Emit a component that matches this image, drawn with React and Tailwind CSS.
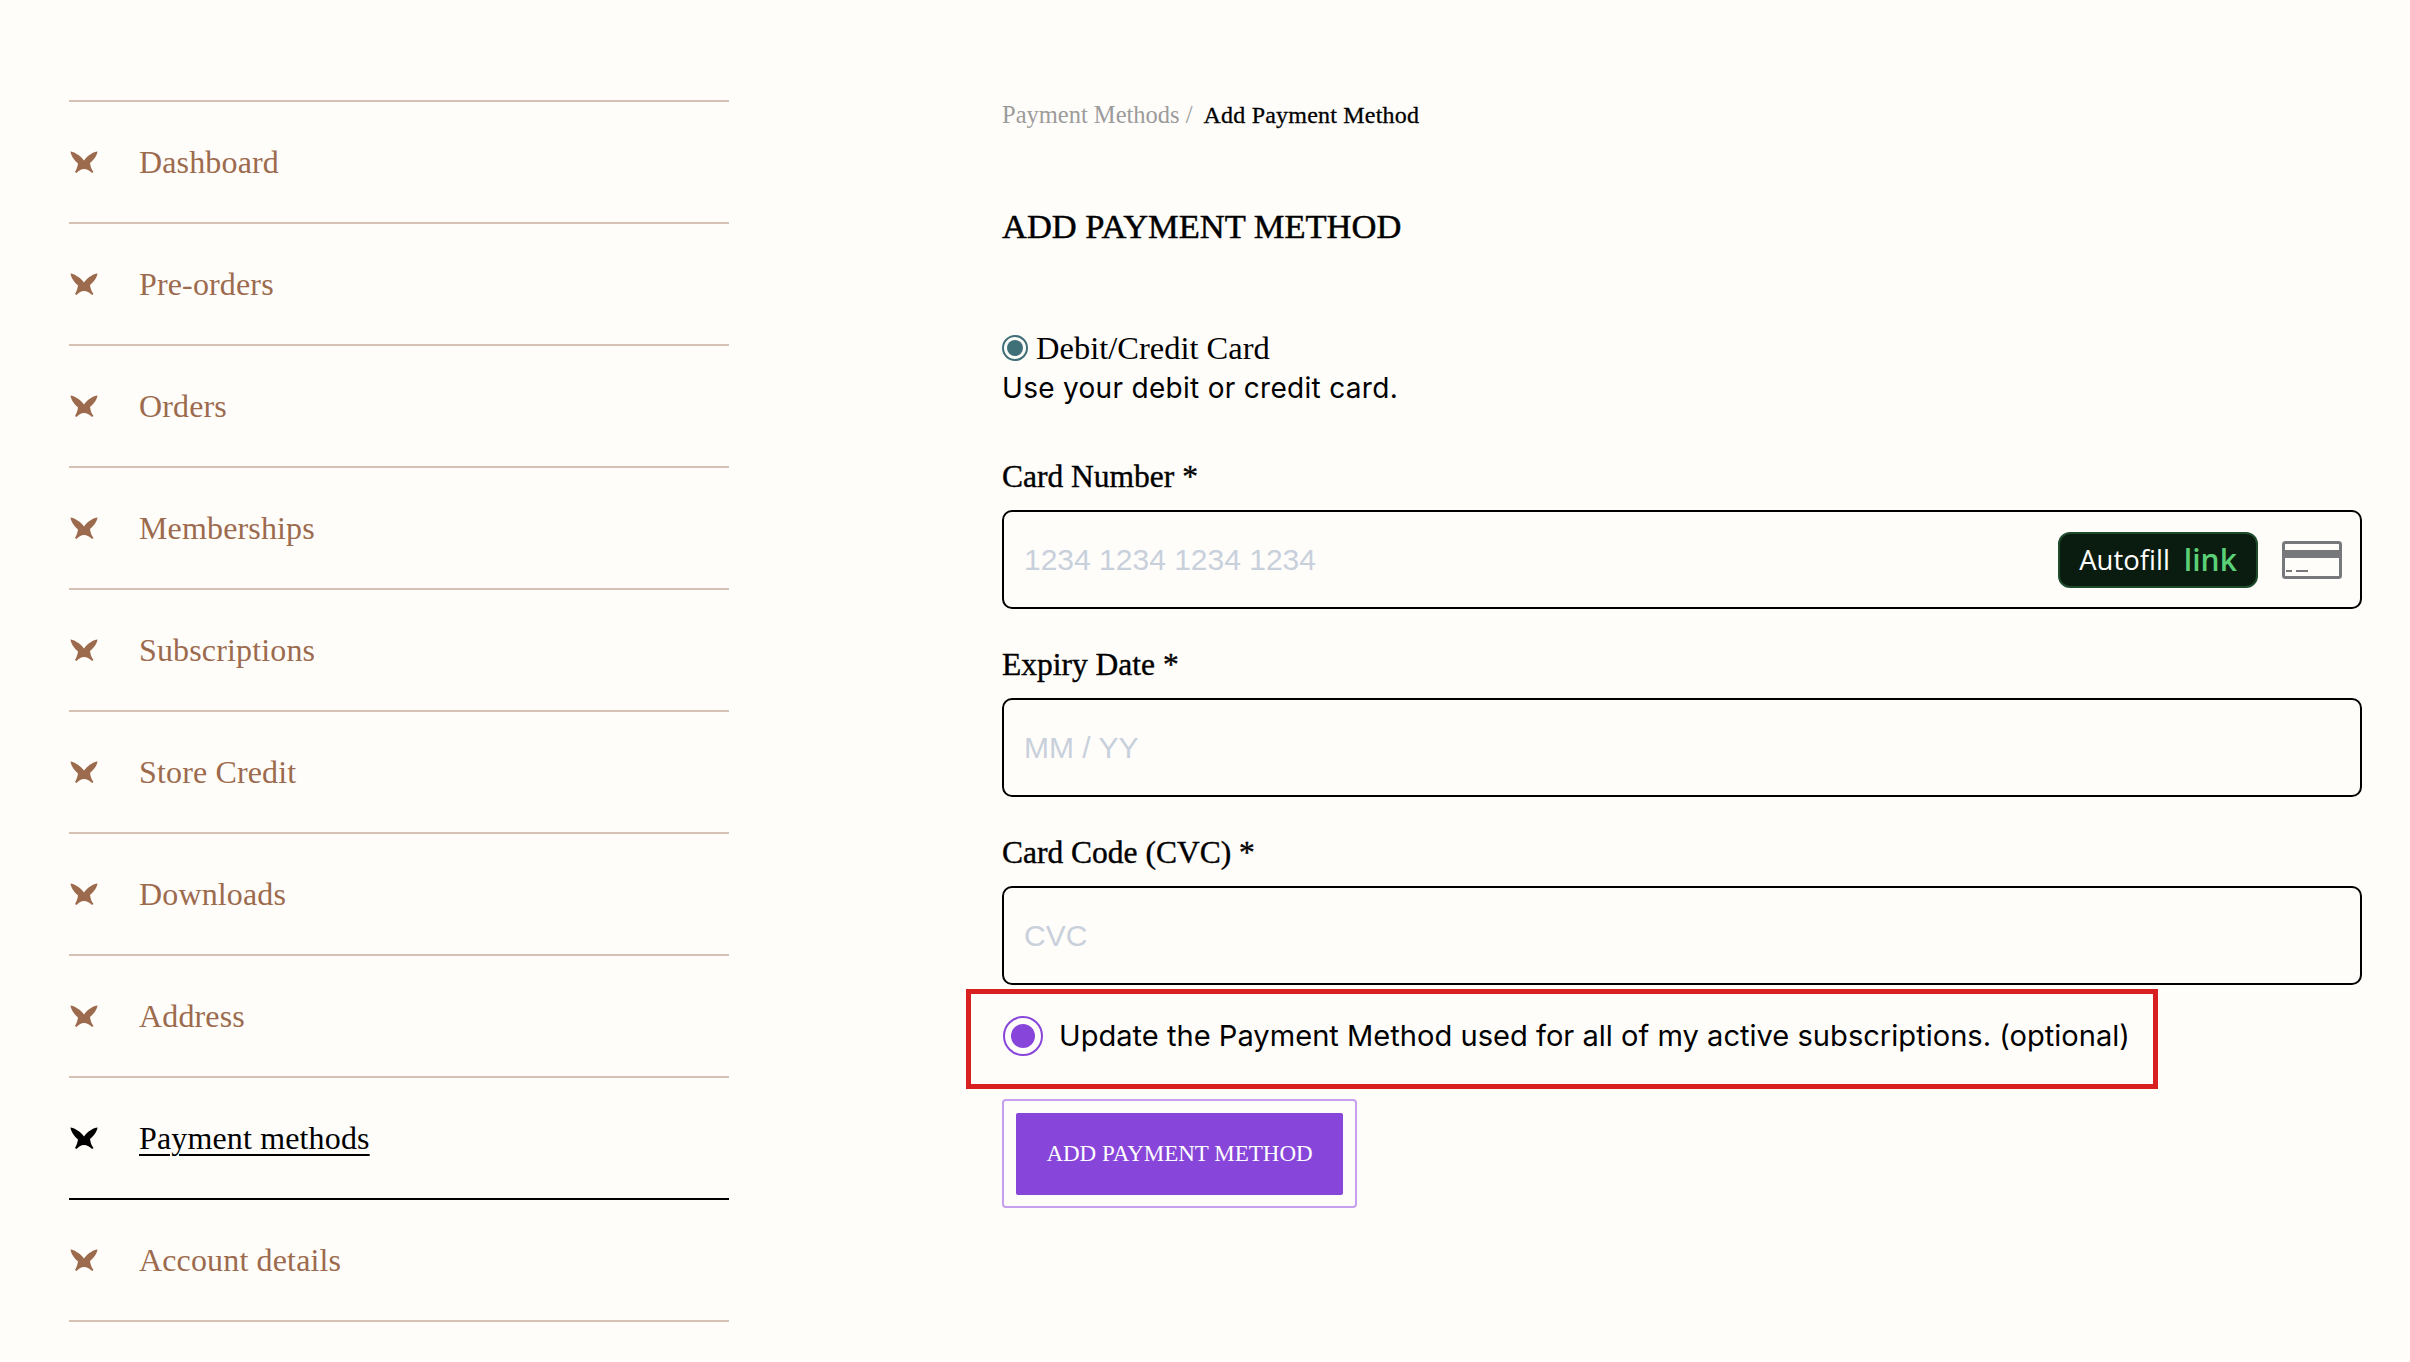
import React from 'react';

const navItems = ['Dashboard', 'Pre-orders', 'Orders', 'Memberships', 'Subscriptions', 'Store Credit', 'Downloads', 'Address', 'Payment methods', 'Account details'];

const Star = ({ className }) => (
  <svg viewBox="0 0 28 22" className={className} fill="currentColor">
    <path d="M0.5 0.5C4 1 10 4 14 9.5C18 4 23.5 1 27.5 0.5C27 5 23 9.5 20 12C20.5 15.5 21.5 18.5 23.5 21L22 22C20 20 17 18 14 18C11 18 8.5 20 6.5 22L5 21C6.5 18.5 7.5 15.5 8 12.5C4.5 9.5 1 5 0.5 0.5Z" />
  </svg>
);

const CardIcon = () => (
  <svg viewBox="0 0 60 38" className="w-[60px] h-[38px] shrink-0">
    <rect x="1.5" y="1.5" width="57" height="35" rx="2" fill="none" stroke="#77787c" strokeWidth="3" />
    <rect x="2" y="9" width="56" height="8" fill="#77787c" />
    <rect x="4" y="29" width="6" height="2" fill="#77787c" />
    <rect x="14" y="29" width="12" height="2" fill="#77787c" />
  </svg>
);

const Sidebar = () => (
  <ul className="w-[660px] shrink-0 border-t-2 border-[#d6c3b5]">
    {navItems.map((item) => {
      const active = item === 'Payment methods';
      return (
        <li key={item} className={`h-[122px] flex items-center border-b-2 ${active ? 'border-black text-black' : 'border-[#d6c3b5] text-[#9c6b4e]'}`}>
          <Star className="w-[28px] h-[22px] ml-[1px] shrink-0" />
          <span className={`ml-[41px] text-[32px] leading-none tracking-[0.15px] ${active ? 'underline decoration-2 underline-offset-[5px]' : ''}`}>{item}</span>
        </li>
      );
    })}
  </ul>
);

const Field = ({ label, placeholder, children }) => (
  <div>
    <label className="block text-[31.5px] leading-[36px] [-webkit-text-stroke:0.4px_black] text-black mb-[15px]">{label}</label>
    <div className="h-[99px] flex items-center border-2 border-black rounded-[10px] pl-[20px] pr-[18px]">
      <input
        readOnly
        placeholder={placeholder}
        className="flex-1 min-w-0 outline-none bg-transparent text-[30px] font-['Liberation_Sans',sans-serif] placeholder:text-[#c8d0dc]"
      />
      {children}
    </div>
  </div>
);

export default function App() {
  return (
    <div className="min-h-[1362px] bg-[#fffdfa] flex pl-[69px] pr-[48px] pt-[100px] font-['Liberation_Serif',serif]">
      <Sidebar />
      <main className="ml-[273px] flex-1 min-w-0">
        <div className="text-[24px] leading-[30px] text-black">
          <span className="text-[24.5px] text-[#9b9b9b]">Payment Methods /</span>
          <span className="ml-[11px] tracking-[0.2px] [-webkit-text-stroke:0.3px_black]">Add Payment Method</span>
        </div>
        <h1 className="mt-[74px] text-[34.5px] leading-[44px] [-webkit-text-stroke:0.5px_black] text-black">ADD PAYMENT METHOD</h1>
        <div className="mt-[80px] flex items-center h-[40px]">
          <span className="w-[26px] h-[26px] rounded-full border-2 border-[#3f6f77] p-[3px] shrink-0">
            <span className="block w-full h-full rounded-full bg-[#3f6f77]"></span>
          </span>
          <span className="ml-[8px] text-[32.5px] leading-none text-black">Debit/Credit Card</span>
        </div>
        <p className="text-[28px] leading-[40px] tracking-[0.3px] font-['Inter',sans-serif] text-black">Use your debit or credit card.</p>
        <div className="mt-[51px] flex flex-col gap-[38px]">
          <Field label="Card Number *" placeholder="1234 1234 1234 1234">
            <div className="w-[200px] h-[56px] flex items-center justify-center gap-[14px] rounded-[12px] bg-[#0a1c10] border-2 border-[#1f4a2c] font-['Open_Sans',sans-serif] mr-[24px]">
              <span className="text-[27.5px] text-white">Autofill</span>
              <span className="text-[30px] font-semibold text-[#5ad077]">link</span>
            </div>
            <CardIcon />
          </Field>
          <Field label="Expiry Date *" placeholder="MM / YY" />
          <Field label="Card Code (CVC) *" placeholder="CVC" />
        </div>
        <div className="mt-[4px] -ml-[36px] w-[1192px] h-[100px] border-[5px] border-[#d7201f] flex items-center pl-[32px] pb-[6px]">
          <span className="w-[40px] h-[40px] rounded-full border-2 border-[#8845d9] p-[6px] shrink-0">
            <span className="block w-full h-full rounded-full bg-[#8845d9]"></span>
          </span>
          <span className="ml-[16px] text-[29.1px] font-['Inter',sans-serif] text-black whitespace-nowrap">Update the Payment Method used for all of my active subscriptions. (optional)</span>
        </div>
        <div className="mt-[10px] w-[355px] h-[109px] border-2 border-[#c6a0ee] rounded-[4px] flex items-center justify-center">
          <button className="w-[327px] h-[82px] bg-[#8845d9] rounded-[2px] text-[23px] pt-[1px] text-white">ADD PAYMENT METHOD</button>
        </div>
      </main>
    </div>
  );
}
